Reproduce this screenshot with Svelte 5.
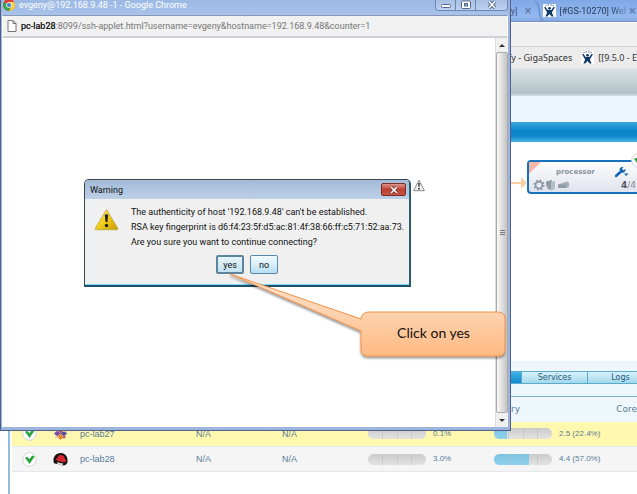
<script>
  const rows = [
    { name: 'pc-lab27', os: 'centos', cpu: 0, cpuText: '0.1%', mem: 22, memText: '2.5 (22.4%)' },
    { name: 'pc-lab28', os: 'redhat', cpu: 0, cpuText: '3.0%', mem: 60, memText: '4.4 (57.0%)' }
  ];
</script>

{#snippet jira()}
  <svg class="jira" viewBox="0 0 13 13" aria-hidden="true">
    <rect width="13" height="13" fill="#fff" />
    <g fill="#12396b">
      <circle cx="6.5" cy="4.3" r="1.4" />
      <path d="M1 3.2 2.6 3 4.6 6h3.8l2-3 1.6.2-2.6 4.3-.5 1.2 1.7 3.8H8.7L6.5 9.900l-2.2 2.6H2.4l1.7-3.8-.5-1.2z" />
      <circle cx="3" cy="1.5" r=".6" /><circle cx="5.2" cy=".9" r=".6" />
      <circle cx="8" cy=".9" r=".6" /><circle cx="10.2" cy="1.5" r=".6" />
    </g>
  </svg>
{/snippet}

{#snippet check()}
  <svg class="check" viewBox="0 0 16 16" aria-hidden="true">
    <circle cx="8" cy="8" r="7.3" fill="#fff" stroke="#cfd2d6" />
    <path d="M3.6 6.2 6 5.6l1.8 2.5 3.2-4 2.2.7L8 12.3z" fill="#22a437" stroke="#22a437" stroke-width=".6" />
  </svg>
{/snippet}

{#snippet gauge(value)}
  <div class="gauge" role="meter" aria-label="usage" aria-valuenow={value} aria-valuemin="0" aria-valuemax="100">
    <div class="fill" style="width: {value}%"></div>
    <i></i><i></i><i></i><i></i>
  </div>
{/snippet}

<div class="desktop">
  <main class="browser">
    <div class="tabs">
      <span class="tab-old">y]</span><span class="x">×</span>
      <svg class="slant" viewBox="0 0 8 21"><path d="M0 1.5C3 2 3 5 4 9s1 11 4 11.500" fill="none" stroke="#5b7fb5" /></svg>
      {@render jira()}
      <span class="tab-title">[#GS-10270] Wel</span><span class="x">×</span>
    </div>
    <div class="toolbar"></div>
    <div class="bookmarks">
      <a href="#giga">fy - GigaSpaces</a>
      <a href="#release">{@render jira()}<span>[[9.5.0 - E</span></a>
    </div>
    <div class="banner"></div>
    <div class="pale"></div>
    <div class="bluebar"></div>

    <section class="canvas">
      <svg class="arrow" viewBox="0 0 18 14"><path d="M0 6h11V1l6 6-6 6V8H0z" fill="#fbd0a4" /></svg>
      <div class="node">
        <span class="corner"></span>
        <div class="node-top">
          <b>processor</b>
          <svg class="wrench" viewBox="0 0 14 12"><path d="M1 10 6 5.500" stroke="#1465b4" stroke-width="2.600" stroke-linecap="round" /><path d="M5 5C4 2 6 .6 8.500 1L7 2.800l1.500 1.500L10.600 3C11 5 9 7.500 6.500 6.500z" fill="#1465b4" /><path d="M9 7.500h4.500L11.200 10z" fill="#1465b4" /></svg>
        </div>
        <div class="node-bottom">
          <svg viewBox="0 0 38 12" class="parts">
            <circle cx="6" cy="6" r="3.400" fill="none" stroke="#8796a3" stroke-width="1.600" />
            <circle cx="6" cy="6" r="4.800" fill="none" stroke="#8796a3" stroke-width="1.500" stroke-dasharray="1.900 1.870" />
            <path d="M13 2.500 19 1v7l-2 3c-3-1-4-4-4-8.500z" fill="#8e9ba6" />
            <path d="M18 3l4-1v8l-4 2z" fill="#b3bdc5" />
            <path d="M25 5.500 34 2.500l2 1v4L34 9h-9z" fill="#a4b0b9" /><path d="M25 5.500h8V9h-8z" fill="#8e9ca7" />
          </svg>
          <span class="count"><b>4</b>/4</span>
        </div>
        <div class="node-check">{@render check()}</div>
      </div>
    </section>

    <section class="hosts">
      <nav>
        <button class="tab active" aria-label="Hosts"></button>
        <button class="tab services">Services</button>
        <button class="tab logs">Logs</button>
      </nav>
      <table>
        <colgroup>
          <col class="c-state" /><col class="c-os" /><col class="c-name" /><col class="c-na" /><col class="c-na" />
          <col class="c-bar" /><col class="c-pct" /><col class="c-bar" /><col />
        </colgroup>
        <thead>
          <tr><th></th><th></th><th></th><th></th><th></th><th></th><th></th><th class="memory">ry</th><th class="core">Core</th></tr>
        </thead>
        <tbody>
          {#each rows as row, i}
            <tr class:selected={i === 0}>
              <td>{@render check()}</td>
              <td>
                {#if row.os === 'centos'}
                  <svg class="os" viewBox="0 0 16 16">
                    <path d="M8 1l2.500 3H15v4l-2 2 .5 3.500-3.500-.5-2 2-2-2-4 .5.5-4L1 7.500 4 6V3h2z" fill="#e8d5c0" />
                    <path d="M8 8 5 4.500 8 1.500l3 3z" fill="#a7437f" /><path d="M8 8l3.500-3L15 8l-3.500 3z" fill="#5a4b97" />
                    <path d="M8 8l3 3.500L8 15l-3-3.500z" fill="#e78b2a" /><path d="M8 8l-3.500 3L1 8l3.500-3z" fill="#7b4d9f" />
                    <path d="M3 3h3.500v3.500z" fill="#d6a636" /><path d="M13 3v3.500L9.500 6z" fill="#e8b53a" /><path d="M13 13H9.500L13 9.500z" fill="#c54b58" />
                  </svg>
                {:else}
                  <svg class="os" viewBox="0 0 16 16">
                    <path d="M1 12C-.5 7 1.500 2 7 1.200 12 .5 16 4 15.500 10c-.3 2.500-1.500 3.500-3 4L9 14.500l-2-1.200z" fill="#151111" />
                    <path d="M2.500 7.500C3.500 6.500 4.500 6.800 5 6c.5-2 1.500-3.200 3-2.800l1.500.3c2 0 3 1.500 3.300 4 2 1.500 1.500 3.200-.8 3.300-4 0-8.500-1.300-9.500-3.300z" fill="#d8262c" />
                    <path d="M4.500 10.500c2 1.200 4 1.800 6.500 1.800L9.500 15l-2-1.500-2.500-.3z" fill="#e9dedb" />
                  </svg>
                {/if}
              </td>
              <td>{row.name}</td>
              <td>N/A</td>
              <td>N/A</td>
              <td>{@render gauge(row.cpu)}</td>
              <td class="num">{row.cpuText}</td>
              <td>{@render gauge(row.mem)}</td>
              <td class="num">{row.memText}</td>
            </tr>
          {/each}
        </tbody>
      </table>
    </section>
  </main>

  <section class="popup">
    <header class="titlebar">
      <svg class="chrome" viewBox="0 0 12 12">
        <circle cx="6" cy="6" r="6" fill="#e33b2e" />
        <path d="M6 6 .8 3A6 6 0 0 0 6 12l2.600-4.500z" fill="#3ba64c" />
        <path d="M6 6l2.600 1.500L6 12a6 6 0 0 0 5.200-9H6z" fill="#fbd13c" />
        <circle cx="6" cy="6" r="2.800" fill="#fff" /><circle cx="6" cy="6" r="2.100" fill="#3f7fd6" />
      </svg>
      <h1>evgeny@192.168.9.48 -1 - Google Chrome</h1>
      <div class="controls">
        <button aria-label="Minimize"><svg viewBox="0 0 12 10"><rect x="1.500" y="4.500" width="9" height="3" rx="1" fill="#fff" stroke="#52688c" /></svg></button>
        <button aria-label="Maximize"><svg viewBox="0 0 12 10"><rect x="1.500" y="1" width="9" height="7.500" rx="1" fill="#fff" stroke="#52688c" /><rect x="4.500" y="3.500" width="3" height="2.500" fill="#8fa9cf" stroke="#52688c" /></svg></button>
        <button aria-label="Close" class="wide"><svg viewBox="0 0 12 10"><path d="M3 1.500 9 8M9 1.500 3 8" stroke="#52688c" stroke-width="3.400" /><path d="M3 1.500 9 8M9 1.500 3 8" stroke="#fff" stroke-width="1.600" /></svg></button>
      </div>
    </header>
    <div class="address">
      <svg class="page" viewBox="0 0 10 12"><path d="M1 .5h5l3 3v8H1z M6 .5v3h3" fill="#fff" stroke="#777" /></svg>
      <span><em>pc-lab28</em>:8099/ssh-applet.html?username=evgeny&amp;hostname=192.168.9.48&amp;counter=1</span>
    </div>
    <div class="body">
      <div class="view">
        <div class="dialog" role="dialog" aria-label="Warning">
          <header>
            <span>Warning</span>
            <button aria-label="Close"><svg viewBox="0 0 10 8"><path d="M2 1l6 6M8 1 2 7" stroke="#6b2a24" stroke-width="3" /><path d="M2 1l6 6M8 1 2 7" stroke="#fff" stroke-width="1.700" /></svg></button>
          </header>
          <div class="message">
            <svg class="alert" viewBox="0 0 24 22">
              <defs><linearGradient id="gold" x2="1" y2="1"><stop offset="0" stop-color="#fff07a" /><stop offset=".5" stop-color="#f4cf17" /><stop offset="1" stop-color="#c79a05" /></linearGradient></defs>
              <path d="M12 1.500 22.800 19.500q.4 1.300-1 1.300H2.200q-1.400 0-1-1.300z" fill="url(#gold)" stroke="#b9a548" stroke-width=".8" stroke-linejoin="round" />
              <path d="M10.300 6.500q1.700-1.200 3.400 0l-.8 7h-1.800z" fill="#222" /><circle cx="12" cy="16.800" r="1.700" fill="#222" />
            </svg>
            <p>The authenticity of host '192.168.9.48' can't be established.<br />RSA key fingerprint is d6:f4:23:5f:d5:ac:81:4f:38:66:ff:c5:71:52:aa:73.<br />Are you sure you want to continue connecting?</p>
          </div>
          <div class="answers">
            <button class="focused">yes</button>
            <button>no</button>
          </div>
        </div>
        <svg class="applet-alert" viewBox="0 0 12 12"><path d="M6 .8 11.400 11.200H.6z" fill="#f4f4f4" stroke="#8a8a8a" stroke-linejoin="round" /><path d="M5.200 3.500h1.600l-.4 4h-.8z" fill="#222" /><circle cx="6" cy="9.200" r=".9" fill="#222" /></svg>
      </div>
      <div class="scroll">
        <span class="up"></span>
        <div class="thumb"><i></i><i></i><i></i></div>
        <span class="down"></span>
      </div>
    </div>
  </section>

  <div class="callout">
    <svg viewBox="0 0 280 92">
      <defs>
        <linearGradient id="peach" x2="0" y2="1"><stop offset="0" stop-color="#ffe3cd" /><stop offset=".45" stop-color="#ffd3b1" /><stop offset="1" stop-color="#ffba82" /></linearGradient>
        <filter id="shade" x="-5%" y="-5%" width="110%" height="120%"><feDropShadow dx="0" dy="2" stdDeviation="1.200" flood-color="#000" flood-opacity=".4" /></filter>
      </defs>
      <path d="M4 2 135 47Q136 40 143 40H272Q279 40 279 47V77Q279 84 272 84H142Q135 84 135 77V59Z" fill="url(#peach)" stroke="#f0924a" filter="url(#shade)" />
    </svg>
    <span>Click on yes</span>
  </div>
</div>

<style>
  :global(body) { background: #fff; }
  .desktop { position: relative; min-height: 100vh; overflow: hidden; font-family: "Noto Sans", sans-serif; font-size: 9px; color: #222; }
  .desktop :global(*) { box-sizing: border-box; }
  svg { display: block; flex: none; }
  button { font: inherit; color: inherit; padding: 0; margin: 0; }

  .browser { display: flex; flex-direction: column; min-height: 100vh; }
  .jira { width: 13px; height: 13px; }
  .tabs { height: 22px; display: flex; align-items: center; justify-content: flex-end; gap: 3px; background: linear-gradient(#7fa8e6, #93b8f0 80%, #84a8dc); border-bottom: 1px solid #7592c0; color: #44587a; white-space: nowrap; font: 9px/12px Roboto, sans-serif; }
  .tab-title { color: #2c3c58; mask-image: linear-gradient(90deg, #000 75%, #0005); }
  .tabs .x { width: 8px; color: #60779f; font-size: 13px; }
  .tab-old { margin-right: 4px; }
  .slant { width: 8px; height: 21px; margin-right: -3px; }
  .toolbar { height: 25px; background: #f0f0f0; border-top: 1px solid #fff; border-bottom: 1px solid #d4d4d4; }
  .bookmarks { height: 21px; display: flex; align-items: center; justify-content: flex-end; gap: 9px; background: #ececec; white-space: nowrap; font-size: 9px; }
  .bookmarks a { display: flex; align-items: center; gap: 4px; color: #333; text-decoration: none; }
  .banner { height: 28px; background: linear-gradient(#dbe3e6, #b2c3c8 90%, #d5e2e6); }
  .pale { height: 26px; background: #ecf6fd; }
  .bluebar { height: 20px; background: linear-gradient(#3ea9df, #0a83c9 45%, #0e88cc 70%, #4ab5e6); }

  .canvas { position: relative; flex: 1; min-height: 219px; }
  .arrow { position: absolute; right: 109px; top: 34px; width: 18px; height: 14px; }
  .node { position: absolute; right: -8px; top: 18px; width: 118px; height: 34px; padding: 3px 7px 0 5px; border: 2px solid #1672bd; border-radius: 4px; background: linear-gradient(#fdfdfe, #dfe3ec); }
  .corner { position: absolute; left: 0; top: 0; border-top: 12px solid #f7b7a8; border-right: 12px solid transparent; }
  .node-top, .node-bottom { display: flex; align-items: center; justify-content: space-between; height: 13px; }
  .node-top { padding: 0 7px 0 22px; color: #8793a0; font: bold 7px/12px "DejaVu Sans", sans-serif; }
  .wrench { width: 14px; height: 12px; }
  .parts { width: 38px; height: 12px; margin-left: -1px; }
  .count { font: 9px/12px "DejaVu Sans", sans-serif; color: #888; }
  .count b { color: #556; }
  .node-check { position: absolute; right: -3px; top: -9px; }
  .check { width: 15px; height: 15px; }

  .hosts { min-height: 133px; margin-left: 8px; border-left: 2px solid #8fbfdd; background: linear-gradient(#eef7fc 61px, #fff 61px); padding: 10px 0 0 2px; overflow: hidden; }
  nav { display: flex; height: 13px; }
  .tab { border: 1px solid #5babcb; border-right-width: 0; background: linear-gradient(#d9f2fb, #a3d8ec); color: #2a5d78; font: 8px/10px "DejaVu Sans", sans-serif; }
  .active { flex: 1; background: linear-gradient(#3eb2e6, #0e8ace); }
  .services { width: 66px; }
  .logs { width: 66px; margin-right: -16px; }
  table { width: 100%; margin-top: 12px; border-top: 1px solid #7fb2cd; border-collapse: collapse; table-layout: fixed; color: #587c98; font: 9px/12px "Liberation Sans", sans-serif; }
  .c-state { width: 31px; } .c-os { width: 37px; } .c-name { width: 116px; } .c-na { width: 86px; } .c-bar { width: 65px; } .c-pct { width: 61px; }
  th { height: 25px; padding: 0; font: 9px/12px "DejaVu Sans", sans-serif; text-align: left; }
  .memory { padding-left: 17px; }
  .core { text-align: right; }
  td { height: 25px; padding: 0; white-space: nowrap; }
  td:first-child, td:nth-child(2) { padding-left: 10px; }
  tbody tr { background: #f5f5f5; border-bottom: 1px solid #e3e8ea; }
  .selected { background: #fff8ae; }
  .num { font-size: 8px; }
  .os { width: 15px; height: 15px; }
  .gauge { position: relative; display: flex; width: 58px; height: 11px; border-radius: 6px; overflow: hidden; background: linear-gradient(#cbcbcb, #e3e3e3); }
  .gauge i { position: relative; flex: 1; border-right: 1px solid #bbb8; }
  .gauge i:last-child { border: 0; }
  .fill { position: absolute; left: 0; top: 0; bottom: 0; background: linear-gradient(#7cc3e2, #8fd1ec); }

  .popup { position: absolute; left: 0; right: 126px; top: 0; bottom: 63px; display: flex; flex-direction: column; padding: 0 2px 3px 1px; background: #9db4dc; border: 1px solid #4f608c; border-top: 0; font-family: Roboto, sans-serif; }
  .titlebar { height: 15px; display: flex; align-items: flex-start; gap: 4px; background: linear-gradient(#9cb9e4, #a9c3ea); padding-left: 1px; }
  .chrome { width: 12px; height: 12px; margin-top: -1px; }
  h1 { flex: 1; margin: 0; font-size: 9px; font-weight: 400; line-height: 11px; color: #fff; white-space: nowrap; }
  .controls { display: flex; height: 11px; border: 1px solid #6d86b4; border-top: 0; border-radius: 0 0 4px 4px; overflow: hidden; }
  .controls button { width: 20px; display: flex; justify-content: center; border: 0; border-right: 1px solid #6d86b4; background: linear-gradient(#a8c0e4, #bdd0ee); }
  .controls .wide { width: 31px; border-right: 0; }
  .controls svg { width: 12px; height: 10px; }
  .address { height: 23px; display: flex; align-items: center; gap: 4px; padding-left: 4px; border: 1px solid #fff; border-top-color: #8797b5; border-bottom: 2px solid #cfd2d8; background: #f1f1f1; color: #777; font-size: 9px; white-space: nowrap; overflow: hidden; }
  .address em { font-style: normal; color: #222; text-shadow: 0 0 #222; }
  .page { width: 10px; height: 12px; }
  .body { flex: 1; display: flex; background: #fff; }
  .view { position: relative; flex: 1; }
  .scroll { width: 13px; display: flex; flex-direction: column; align-items: center; background: #f0f0f0; border-left: 1px solid #ddd; }
  .up, .down { height: 14px; display: flex; align-items: center; }
  .up::before { content: ""; border: 3px solid transparent; border-top: 0; border-bottom-color: #333; }
  .down::before { content: ""; border: 3px solid transparent; border-bottom: 0; border-top-color: #333; }
  .thumb { flex: 1; align-self: stretch; display: flex; flex-direction: column; align-items: center; justify-content: center; gap: 1px; border: 1px solid #aaa; border-radius: 2px; background: linear-gradient(90deg, #fafafa, #e4e4e4 40%, #c4c4c4); }
  .thumb i { width: 5px; height: 1px; background: #777; }

  .dialog { position: absolute; left: 82px; top: 141px; width: 327px; border: 1px solid #3c464e; border-right: 2px solid #2c5c70; border-bottom: 2px solid #22506a; border-radius: 5px 5px 0 0; background: #f0f0f0; overflow: hidden; box-shadow: inset 0 -1px #7fdcf5; color: #111; }
  .dialog header { height: 19px; display: flex; align-items: center; justify-content: space-between; padding: 0 3px 0 5px; background: linear-gradient(#a3bbd8, #bdd0e6); }
  .dialog header button { width: 25px; height: 13px; display: flex; align-items: center; justify-content: center; border: 1px solid #7a2c26; border-radius: 2px; background: linear-gradient(#dc9588, #bf4033 50%, #c65345); }
  .dialog header svg { width: 10px; height: 8px; }
  .message { display: flex; gap: 12px; padding: 6px 0 0 9px; }
  .alert { width: 25px; height: 23px; margin-top: 3px; }
  .message p { margin: 0; line-height: 15px; font-size: 9px; white-space: nowrap; }
  .answers { display: flex; justify-content: center; gap: 6px; padding: 5px 0 11px; }
  .answers button { width: 28px; height: 19px; border: 1px solid #5b87a5; border-radius: 2px; background: linear-gradient(#f2fafe, #d8effa 50%, #b5dff3); }
  .answers .focused { border: 2px solid #5c859c; background: linear-gradient(#e6f3fa, #c3e2f2); }
  .applet-alert { position: absolute; left: 411px; top: 141px; width: 12px; height: 13px; }

  .callout { position: absolute; left: 226px; top: 272px; width: 280px; height: 92px; font: 14px/20px Lato, sans-serif; color: #111; }
  .callout svg { width: 280px; height: 92px; }
  .callout span { position: absolute; left: 135px; right: 0; top: 51px; text-align: center; }
</style>
